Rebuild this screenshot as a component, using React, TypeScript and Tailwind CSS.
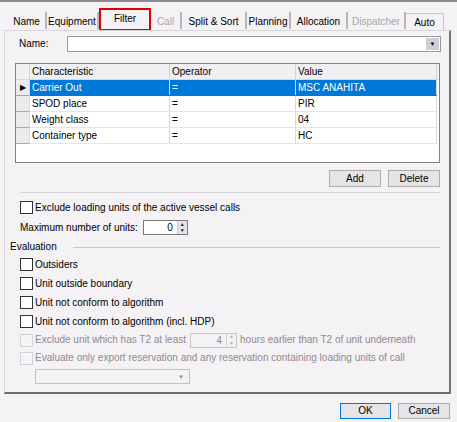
import React from "react";

const font = { fontFamily: '"Liberation Sans", Arial, sans-serif' };

type TabProps = { label: string; width: string; disabled?: boolean };

function Tab({ label, width, disabled }: TabProps) {
  return (
    <div className={`flex items-center justify-center h-[17px] mb-[1px] pt-[2px] border-r-2 border-[#b9b6bb] ${width}`}>
      <span className={disabled ? "text-[#a8a6aa]" : "text-black"}>{label}</span>
    </div>
  );
}

function Check({ label, disabled }: { label: string; disabled?: boolean }) {
  return (
    <div className="flex items-center gap-[2px] h-[19px] whitespace-nowrap">
      <div
        className={`w-[13px] h-[13px] border shrink-0 ${
          disabled ? "border-[#d3d1d5] bg-[#f6f4f7]" : "border-[#333] bg-white"
        }`}
      />
      <span className={disabled ? "text-[#8d8b8f]" : "text-black"}>{label}</span>
    </div>
  );
}

function Spinner({ value, width, disabled }: { value: string; width: string; disabled?: boolean }) {
  return (
    <div
      className={`flex h-[15px] border ${width} ${
        disabled ? "border-[#c9c7cb] bg-[#f4f2f5]" : "border-[#7a7a7a] bg-white"
      }`}
    >
      <div className={`flex-1 text-right pr-[4px] leading-[13px] ${disabled ? "text-[#8d8b8f]" : ""}`}>
        {value}
      </div>
      <div
        className={`w-[10px] flex flex-col border-l ${
          disabled ? "border-[#d0ced2] bg-[#f4f2f5]" : "border-[#c8c8c8] bg-[#e3e2e8]"
        }`}
      >
        <div className={`flex-1 flex items-center justify-center text-[5px] leading-none ${disabled ? "text-[#b0aeb2]" : "text-[#222]"}`}>▲</div>
        <div className={`flex-1 flex items-center justify-center text-[5px] leading-none ${disabled ? "text-[#b0aeb2]" : "text-[#222]"}`}>▼</div>
      </div>
    </div>
  );
}

const rows = [
  { c: "Carrier Out", o: "=", v: "MSC ANAHITA", sel: true },
  { c: "SPOD place", o: "=", v: "PIR" },
  { c: "Weight class", o: "=", v: "04" },
  { c: "Container type", o: "=", v: "HC" },
];

export default function App() {
  return (
    <div
      className="w-[457px] h-[422px] bg-[#f4f2f5] border-t-2 border-[#8e8c90] text-[10px] leading-[12px] text-black flex flex-col whitespace-nowrap"
      style={font}
    >
      {/* tabs */}
      <div className="flex items-end h-[28px] pl-[8px]">
        <Tab label="Name" width="w-[39px]" />
        <Tab label="Equipment" width="w-[52px]" />
        <div className="flex items-center justify-center w-[52px] h-[23px] border-2 border-[#e00000] bg-[#f4f2f5] mb-[-1px]">
          <span className="mb-[1px]">Filter</span>
        </div>
        <Tab label="Call" width="w-[31px]" disabled />
        <Tab label="Split & Sort" width="w-[65px]" />
        <Tab label="Planning" width="w-[44px]" />
        <Tab label="Allocation" width="w-[57px]" />
        <Tab label="Dispatcher" width="w-[58px]" disabled />
        <div className="flex items-center justify-center w-[38px] h-[17px] pt-[2px] border-r border-t border-[#c9c6cb]">Auto</div>
      </div>

      {/* panel */}
      <div className="ml-[4px] mr-[6px] h-[364px] border-l border-t border-b-2 border-r-2 border-[#d8d6da] border-r-[#77757a] border-b-[#6e6c70] flex flex-col pl-[10px] pr-[9px]">
        <div className="flex items-center mt-[5px] h-[16px] -mr-[1px]">
          <span className="w-[52px] pl-[4px]">Name:</span>
          <div className="flex-1 h-[16px] border border-[#9a9a9a] bg-white flex justify-end">
            <div className="w-[13px] my-[1px] mr-[1px] bg-[#cfcdd8] flex items-center justify-center text-[6px] leading-none">▼</div>
          </div>
        </div>

        {/* grid */}
        <div className="mt-[11px] h-[100px] border border-[#828085] bg-white">
          <div className="flex h-[16px] bg-[#f0eff2] border-b border-[#d8d8d8]">
            <div className="w-[14px] border-r border-[#d0d0d0]" />
            <div className="w-[140px] pl-[2px] leading-[15px] border-r border-[#d0d0d0]">Characteristic</div>
            <div className="w-[126px] pl-[2px] leading-[15px] border-r border-[#d0d0d0]">Operator</div>
            <div className="w-[141px] pl-[2px] leading-[15px] border-r border-[#d0d0d0]">Value</div>
          </div>
          {rows.map((r) => (
            <div key={r.c} className="flex h-[16px]">
              <div className="w-[14px] bg-[#eceaed] border-b border-[#a9a7b3] border-r border-r-[#d8d8d8] flex items-center justify-center text-[8px]">
                {r.sel ? "▶" : ""}
              </div>
              <div
                className={`flex w-[407px] border-b ${
                  r.sel ? "bg-[#0078d7] text-white border-[#0078d7]" : "border-[#e4e4e4]"
                }`}
              >
                <div className="w-[140px] pl-[2px] leading-[15px] border-r border-[#d8d8d8]">{r.c}</div>
                <div className="w-[126px] pl-[2px] leading-[15px] border-r border-[#d8d8d8]">{r.o}</div>
                <div className="w-[141px] pl-[2px] leading-[15px] border-r border-[#d8d8d8]">{r.v}</div>
              </div>
            </div>
          ))}
        </div>

        <div className="flex justify-end gap-[7px] mt-[7px]">
          <button className="w-[52px] h-[17px] border border-[#adadad] bg-[#e5e4e7] leading-[15px]">Add</button>
          <button className="w-[52px] h-[17px] border border-[#adadad] bg-[#e5e4e7] leading-[15px]">Delete</button>
        </div>

        <div className="mt-[5px] ml-[5px] border-t border-[#d3d1d5]" />

        <div className="ml-[5px] mt-[5px]">
          <Check label="Exclude loading units of the active vessel calls" />
        </div>
        <div className="ml-[5px] mt-[3px] flex items-center gap-[5px]">
          <span>Maximum number of units:</span>
          <Spinner value="0" width="w-[45px]" />
        </div>

        <div className="flex items-center -ml-[5px] mt-[5px] h-[14px]">
          <span>Evaluation</span>
          <div className="flex-1 ml-[16px] border-t border-[#c9c7cb]" />
        </div>

        <div className="ml-[5px] mt-[1px] flex flex-col">
          <Check label="Outsiders" />
          <Check label="Unit outside boundary" />
          <Check label="Unit not conform to algorithm" />
          <Check label="Unit not conform to algorithm (incl. HDP)" />
          <div className="flex items-center h-[18px]">
            <Check label="Exclude unit which has T2 at least" disabled />
            <div className="ml-[4px]">
              <Spinner value="4" width="w-[47px]" disabled />
            </div>
            <span className="ml-[3px] text-[#8d8b8f]">hours earlier than T2 of unit underneath</span>
          </div>
          <div className="h-[18px] flex items-center">
            <Check label="Evaluate only export reservation and any reservation containing loading units of call" disabled />
          </div>
          <div className="ml-[15px] mt-[2px] w-[155px] h-[15px] border border-[#c2c0c4] flex justify-end items-center pr-[5px] text-[6px] text-[#8d8b8f]">
            ▼
          </div>
        </div>
      </div>

      {/* footer */}
      <div className="flex justify-end gap-[7px] mt-[9px] pr-[7px]">
        <button className="w-[51px] h-[16px] border border-[#0078d7] bg-[#e5e4e7] leading-[14px]">OK</button>
        <button className="w-[52px] h-[16px] border border-[#adadad] bg-[#e5e4e7] leading-[14px]">Cancel</button>
      </div>
    </div>
  );
}
